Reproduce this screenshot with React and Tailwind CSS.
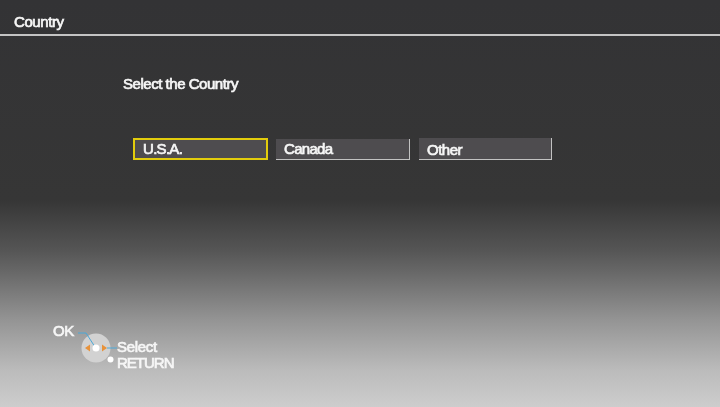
export default function App() {
  const font = { fontFamily: '"Liberation Sans", Arial, sans-serif' };
  return (
    <div style={font} className="w-[720px] h-[407px] overflow-hidden flex flex-col text-[#f6f6f6] bg-[linear-gradient(to_bottom,#333335_0px,#363636_200px,#555555_250px,#666666_270px,#949494_320px,#bbbbbb_370px,#cdcdcd_407px)]">
      <header className="h-[36px] shrink-0 border-b-2 border-[#c4c4c4] pl-[14px] pt-[13px] text-[15px] leading-[17px] tracking-[-0.4px] [-webkit-text-stroke:0.7px_#f6f6f6] blur-[0.3px]">
        Country
      </header>
      <main className="flex flex-col flex-1 blur-[0.3px]">
        <p className="ml-[123px] mt-[39px] text-[15px] leading-[17px] tracking-[-0.47px] [-webkit-text-stroke:0.7px_#f6f6f6]">Select the Country</p>
        <div className="ml-[133px] mt-[46px] flex items-start gap-[8px] text-[15px] [-webkit-text-stroke:0.7px_#f6f6f6]">
          <button className="w-[135px] h-[22px] border-2 border-[#e2cc0c] bg-[#4e4c4f] pl-[8px] text-left leading-[18px] tracking-[-0.7px]">U.S.A.</button>
          <button className="mt-[1px] w-[134px] h-[21px] border-r border-b border-[#c2c2c2] bg-[#4e4c4f] pl-[8px] text-left leading-[18px] tracking-[-0.7px]">Canada</button>
          <button className="ml-[1px] w-[133px] h-[22px] border-r border-b border-[#c2c2c2] bg-[#4e4c4f] pl-[8px] text-left leading-[23px] tracking-[-0.5px]">Other</button>
        </div>
        <footer className="ml-[53px] mt-[163px] flex items-start text-[15px] leading-[16px] tracking-[-0.3px] [-webkit-text-stroke:0.7px_#f6f6f6]">
          <span className="w-[27px]">OK</span>
          <svg width="40" height="46" viewBox="0 0 40 46" className="mt-[1px] shrink-0 overflow-visible">
            <circle cx="16" cy="24" r="14.5" fill="#d2d2d2" />
            <path d="M-2 9 L6 9 L15 23" stroke="#4aa8d8" strokeWidth="1" fill="none" />
            <circle cx="16" cy="24" r="3.5" fill="#ffffff" />
            <path d="M5 24 L10 20.5 L10 27.5 Z" fill="#e8923a" />
            <path d="M27 24 L22 20.5 L22 27.5 Z" fill="#e8923a" />
            <path d="M27 24 L37 24" stroke="#4aa8d8" strokeWidth="1" />
            <circle cx="30.5" cy="35.5" r="3" fill="#ffffff" />
          </svg>
          <div className="-ml-[3px] mt-[16px] flex flex-col">
            <span>Select</span>
            <span className="tracking-[-1px]">RETURN</span>
          </div>
        </footer>
      </main>
    </div>
  );
}
